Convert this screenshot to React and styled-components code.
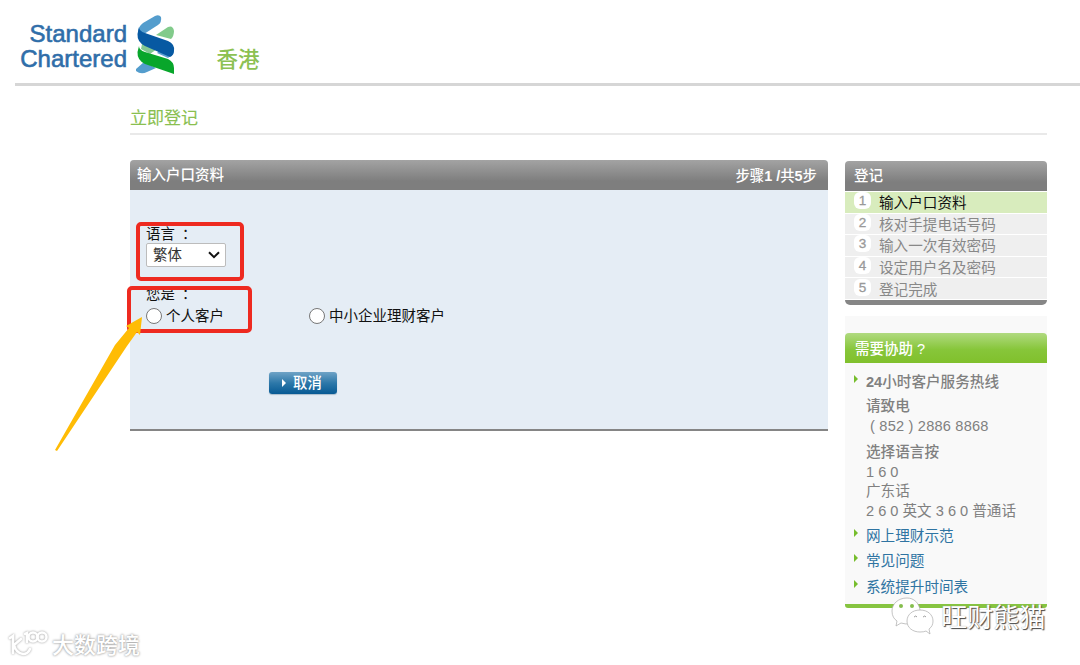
import React from 'react'
import styled, { createGlobalStyle, css } from 'styled-components'

const GlobalStyle = createGlobalStyle`
    * {
        box-sizing: border-box;
    }

    body {
        margin: 0;
        background: #fff;
        font-family: "Liberation Sans", "Noto Sans CJK SC", sans-serif;
        font-size: 14.6px;
        color: #222;
    }
`

const Page = styled.div`
    position: relative;
    width: 1080px;
    height: 665px;
    overflow: hidden;
`

const Header = styled.header`
    display: flex;
    height: 86px;
    margin-left: 15px;
    border-bottom: 3px solid #d6d6d6;
`

const BrandName = styled.div`
    width: 112px;
    padding-top: 22px;
    font-size: 24px;
    line-height: 24.5px;
    text-align: right;
    white-space: nowrap;
    color: #2f6ea9;
    -webkit-text-stroke: 0.6px #2f6ea9;
`

const BrandMark = styled.svg`
    width: 42px;
    height: 62px;
    margin: 13px 0 0 7px;
`

const Region = styled.div`
    margin: 45px 0 0 40.5px;
    font-size: 21.5px;
    line-height: 30px;
    font-weight: 500;
    color: #8cc152;
`

const Main = styled.main`
    width: 917px;
    margin-left: 130px;
`

const PageTitle = styled.h1`
    height: 49px;
    margin: 0;
    padding-top: 21px;
    border-bottom: 2px solid #e9e9e9;
    font-size: 17px;
    line-height: 24px;
    font-weight: 400;
    color: #8abf50;
    -webkit-text-stroke: 0.15px #8abf50;
`

const Columns = styled.div`
    display: flex;
    justify-content: space-between;
    align-items: flex-start;
    padding-top: 25px;
`

const Panel = styled.section`
    width: 698px;
    height: 271px;
    background: #e5edf5;
    border-bottom: 2px solid #858585;
    border-radius: 4px 4px 0 0;
`

const Bar = styled.div`
    display: flex;
    justify-content: space-between;
    height: 30px;
    padding: 0 11px 0 ${({ $indent }) => $indent || 7}px;
    border-radius: 4px 4px 0 0;
    font-size: 14.5px;
    line-height: 30px;
    font-weight: 500;
    color: #fff;
    background: linear-gradient(#a3a3a3, #7e7e7e 70%);
    ${({ $green }) => $green && css`
        line-height: 32px;
        background: linear-gradient(#b0da80, #87c63a 55%, #80c02c);
    `}
`

const BarStep = styled.span`
    font-size: 14.4px;
    line-height: 32px;
    font-weight: 500;
`

const Form = styled.form`
    padding: 33px 16px 0;
    color: #111;
`

const Label = styled.div`
    height: 20px;
    font-size: 14.4px;
    line-height: 20px;
    word-spacing: 4px;
    font-family: "Noto Sans CJK SC", sans-serif;
`

const Select = styled.div`
    display: flex;
    align-items: center;
    justify-content: space-between;
    width: 80px;
    height: 24px;
    margin-bottom: 16px;
    padding: 0 5px 0 6px;
    border: 1px solid #bcbcbc;
    border-radius: 2px;
    background: #fff;
    font-size: 14.4px;
    line-height: 22px;
    color: #333;
`

const Options = styled.div`
    display: flex;
    height: 24px;
    margin-top: 1px;
`

const Option = styled.label`
    display: flex;
    align-items: center;
    gap: 4px;
    width: 163px;
    font-size: 14.5px;
    line-height: 24px;
    white-space: nowrap;
`

const OptionText = styled.span`
    margin-top: -1px;
`

const Radio = styled.span`
    width: 16px;
    height: 16px;
    margin-top: -1px;
    border: 1px solid #777;
    border-radius: 50%;
    background: #fff;
`

const Cancel = styled.button`
    display: flex;
    align-items: center;
    gap: 7px;
    width: 68px;
    height: 22px;
    margin: 44px 0 0 123px;
    padding: 0 0 1px 13px;
    border: 0;
    border-radius: 3px;
    background: linear-gradient(#6fa3c6, #2d78a9 50%, #075a94);
    box-shadow: 0 1px 1px #a9bccb;
    font-family: inherit;
    font-size: 14.4px;
    font-weight: 500;
    line-height: 20px;
    color: #fff;
`

const Aside = styled.aside`
    width: 202px;
    padding-top: 1px;
`

const Steps = styled.ol`
    height: 108px;
    margin: 0;
    padding: 0;
    list-style: none;
`

const Step = styled.li`
    display: flex;
    align-items: center;
    height: 21.6px;
    padding-left: 9px;
    border-top: 1px solid #fff;
    background: ${({ $active }) => ($active ? '#d8ecbd' : '#efefef')};
    color: ${({ $active }) => ($active ? '#111' : '#888')};
    line-height: 20px;
`

const StepNumber = styled.span`
    width: 17px;
    height: 17px;
    margin: -3px 8px 0 0;
    border-radius: 6px;
    background: #fff;
    font-size: 13.5px;
    line-height: 17px;
    text-align: center;
    color: #999;
    -webkit-text-stroke: 0.3px #999;
`

const StepText = styled.span`
    padding-top: 2px;
`

const StepsEnd = styled.div`
    height: 6px;
    border-top: 1px solid #fff;
    border-radius: 0 0 5px 5px;
    background: #868686;
`

const Help = styled.section`
    height: 292px;
    margin-top: 11px;
    padding-top: 17px;
    border-bottom: 4px solid #86c440;
    border-radius: 0 0 3px 3px;
    background: #f9f9f9;
`

const HelpBody = styled.div`
    padding: 8px 0 0 9px;
    color: #808080;
`

const HelpRow = styled.div`
    display: flex;
    height: ${({ $height }) => $height}px;
    line-height: 22px;
    font-weight: ${({ $strong }) => ($strong ? 500 : 400)};
    color: ${({ $link }) => ($link ? '#2f74a2' : 'inherit')};

    svg {
        margin: 4px 8px 0 0;
    }
`

const HelpText = styled.div`
    height: ${({ $height }) => $height}px;
    padding-left: ${({ $indent }) => $indent || 0}px;
    margin-left: 12px;
    line-height: 20px;
    white-space: pre;
    font-weight: ${({ $strong }) => ($strong ? 500 : 400)};
    letter-spacing: ${({ $spacing }) => $spacing || 0}px;
`

const Highlight = styled.div`
    position: absolute;
    left: ${({ $x }) => $x}px;
    top: ${({ $y }) => $y}px;
    width: ${({ $w }) => $w}px;
    height: ${({ $h }) => $h}px;
    border: 4px solid #ee2a20;
    border-radius: 5px;
`

const Arrow = styled.svg`
    position: absolute;
    left: 50px;
    top: 312px;
`

const Watermark = styled.div`
    position: absolute;
    left: 891px;
    top: 597px;
    display: flex;
    gap: 6px;
    font-size: 26.2px;
    line-height: 42px;
    color: #fff;
    text-shadow: 1px 1px 1px #444, 0 0 1px #999;
`

const SiteMark = styled.div`
    position: absolute;
    left: 8px;
    top: 628px;
    display: flex;
    gap: 3px;
    font-size: 22px;
    line-height: 36px;
    font-weight: 500;
    color: #fff;
    text-shadow: 0 0 2px #999, 0 0 3px #bbb;

    svg {
        filter: drop-shadow(0 0 1px #999);
    }
`

const Triangle = ({ color }) => (
    <svg width="4" height="8" viewBox="0 0 4 8">
        <path d="M0 0L4 4L0 8Z" fill={color} />
    </svg>
)

const steps = [
    '输入户口资料',
    '核对手提电话号码',
    '输入一次有效密码',
    '设定用户名及密码',
    '登记完成',
]

const links = [
    { text: '网上理财示范', height: 25 },
    { text: '常见问题', height: 26 },
    { text: '系统提升时间表', height: 22 },
]

const App = () => {
    return (
        <Page>
            <GlobalStyle />
            <Header>
                <BrandName>Standard<br />Chartered</BrandName>
                <BrandMark viewBox="134 13 42 62">
                    <path d="M138 32Q138 27 143 23L155 16Q159 14 161 17Q162 22 158 25L144 34Z" fill="#549dcd" />
                    <path d="M156 35L168 27Q173 25 174 31Q174 36 171 39Z" fill="#82cb8b" />
                    <path d="M141 49L142 44Q147 42 151 45L157 49L150 54Z" fill="#83c892" />
                    <path d="M157 53L162 48L173 54L168 58Z" fill="#5b9fd0" />
                    <path d="M136 69L144 62L156 68L147 72Q141 75 136 71Z" fill="#549dcd" />
                    <path d="M139 27Q139 31 145 33L168 41Q175 44 174 51Q174 55 170 57L145 46Q137 42 137.500 34Z" fill="#0759a2" />
                    <path d="M139 46Q139 50 145 52L168 59Q174 62 174 68V74L145 64Q137 60 137.500 52Z" fill="#08a62b" />
                </BrandMark>
                <Region>香港</Region>
            </Header>

            <Main>
                <PageTitle>立即登记</PageTitle>
                <Columns>
                    <Panel>
                        <Bar>
                            <span>输入户口资料</span>
                            <BarStep>步骤<b>1 /</b>共<b>5</b>步</BarStep>
                        </Bar>
                        <Form>
                            <Label>语言 ：</Label>
                            <Select>
                                繁体
                                <svg width="12" height="8" viewBox="0 0 12 8" fill="none" stroke="#111" strokeWidth="2">
                                    <path d="M1 1.2L6 6.2L11 1.2" />
                                </svg>
                            </Select>
                            <Label>您是 ：</Label>
                            <Options>
                                <Option><Radio /><OptionText>个人客户</OptionText></Option>
                                <Option><Radio /><OptionText>中小企业理财客户</OptionText></Option>
                            </Options>
                            <Cancel type="button">
                                <Triangle color="#fff" />
                                取消
                            </Cancel>
                        </Form>
                    </Panel>

                    <Aside>
                        <Bar $indent={9}>登记</Bar>
                        <Steps>
                            {steps.map((step, i) => (
                                <Step key={step} $active={i === 0}>
                                    <StepNumber>{i + 1}</StepNumber>
                                    <StepText>{step}</StepText>
                                </Step>
                            ))}
                        </Steps>
                        <StepsEnd />
                        <Help>
                            <Bar $green $indent={10}>需要协助 ?</Bar>
                            <HelpBody>
                                <HelpRow $height={25} $strong>
                                    <Triangle color="#76bd2c" />
                                    <span><b>24</b>小时客户服务热线</span>
                                </HelpRow>
                                <HelpText $height={20} $strong>请致电</HelpText>
                                <HelpText $height={26} $indent={4} $spacing={0.2}>( 852 ) 2886 8868</HelpText>
                                <HelpText $height={20} $strong>选择语言按</HelpText>
                                <HelpText $height={19}>1 6 0</HelpText>
                                <HelpText $height={20}>广东话</HelpText>
                                <HelpText $height={24}>2 6 0 英文 3 6 0 普通话</HelpText>
                                {links.map(({ text, height }) => (
                                    <HelpRow key={text} $height={height} $link>
                                        <Triangle color="#76bd2c" />
                                        <span>{text}</span>
                                    </HelpRow>
                                ))}
                            </HelpBody>
                        </Help>
                    </Aside>
                </Columns>
            </Main>

            <Highlight $x={136} $y={222} $w={108} $h={59} />
            <Highlight $x={127} $y={286} $w={125} $h={47} />
            <Arrow width="94" height="142" viewBox="50 312 94 142">
                <path d="M55 450L115 345L129 328L126 326L142 317L140 335L137 332L127 346L57 451Z" fill="#ffbc05" />
            </Arrow>

            <Watermark>
                <svg width="44" height="40" viewBox="0 0 44 40" fill="#fff" stroke="#aaa" strokeWidth="0.7">
                    <path d="M16 1C7 1 1 7 1 14C1 19 3 22 6 24L5 29L10 26Q15 28 20 26C27 25 30 20 29 13C28 6 23 1 16 1Z" />
                    <path d="M29 13C21 13 16 18 16 24C16 31 22 35 29 35Q33 35 35 34L39 37L38 32C41 30 42 27 42 24C42 18 37 13 29 13Z" />
                    <g fill="#85bd4d" stroke="none">
                        <circle cx="10" cy="9" r="2" />
                        <circle cx="21" cy="9" r="2" />
                    </g>
                    <path d="M23 20q2-2 3 0M32 20q2-2 3 0" fill="none" stroke="#777" />
                </svg>
                旺财熊猫
            </Watermark>

            <SiteMark>
                <svg width="41" height="32" viewBox="0 0 41 32" fill="none" stroke="#fff" strokeWidth="2.6" strokeLinecap="round">
                    <path d="M2 10L5 8V25M13 11L6 17Q8 25 15 26Q20 26 22 21" />
                    <path d="M17 6L19 5V14" />
                    <circle cx="25" cy="9" r="4.5" />
                    <circle cx="34" cy="9" r="4.5" />
                </svg>
                大数跨境
            </SiteMark>
        </Page>
    )
}

export default App
